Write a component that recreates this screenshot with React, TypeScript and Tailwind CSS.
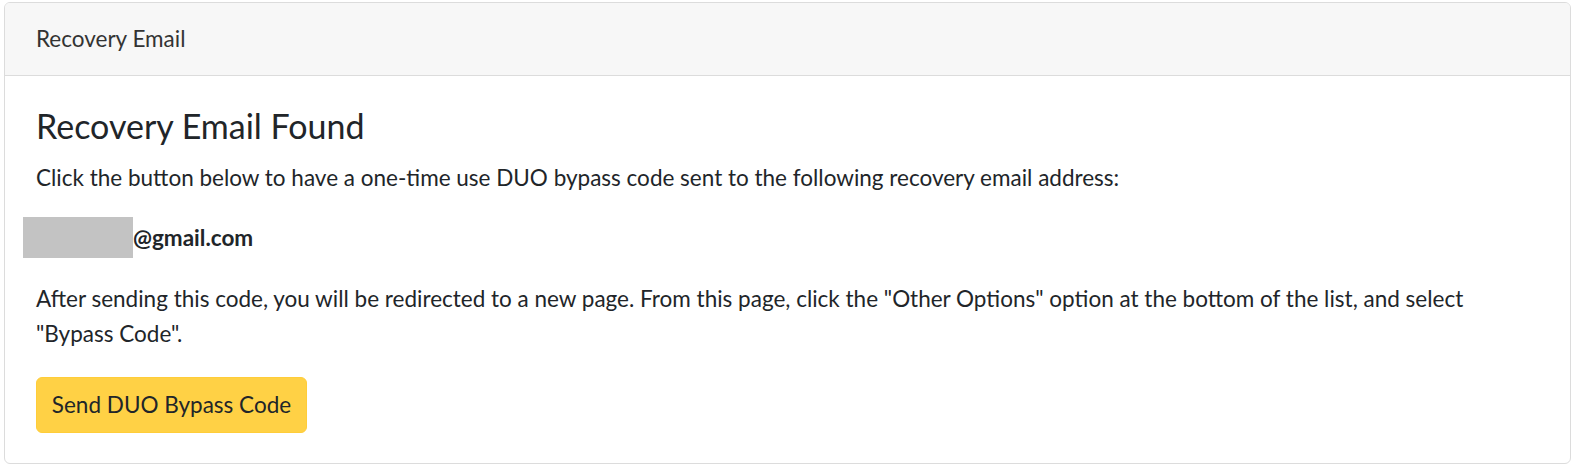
import React from "react";

const font = { fontFamily: "Lato, 'Noto Sans', sans-serif" };

const App: React.FC = () => {
  return (
    <div className="bg-white min-h-screen pt-[2px] pl-[4px] pr-[5px] text-[#212529]" style={font}>
      <div className="border border-[#dcdcdc] rounded-[6px] overflow-hidden">
        <div className="bg-[#f7f7f7] border-b border-[#dcdcdc] h-[73px] px-[31px] flex items-center text-[22.5px] text-[#333]">
          Recovery Email
        </div>
        <div className="px-[31px] pt-[28px] pb-[30px]">
          <h3 className="text-[34px] leading-[43px] mb-[13px]">Recovery Email Found</h3>
          <p className="text-[22.5px] leading-[36px] mb-[21px]">
            Click the button below to have a one-time use DUO bypass code sent to the following recovery email address:
          </p>
          <p className="text-[22.5px] leading-[36px] mb-[23px] font-bold flex items-center">
            <span className="inline-block w-[110px] h-[41px] bg-[#c3c3c3] ml-[-13px]" />
            @gmail.com
          </p>
          <p className="text-[22.5px] leading-[35px] mb-[26px]">
            After sending this code, you will be redirected to a new page. From this page, click the "Other Options" option at the bottom of the list, and select "Bypass Code".
          </p>
          <button className="bg-[#ffd145] rounded-[6px] h-[56px] w-[271px] text-[22.5px] text-[#212529] border border-[#ffcd39]">
            Send DUO Bypass Code
          </button>
        </div>
      </div>
    </div>
  );
};

export default App;
